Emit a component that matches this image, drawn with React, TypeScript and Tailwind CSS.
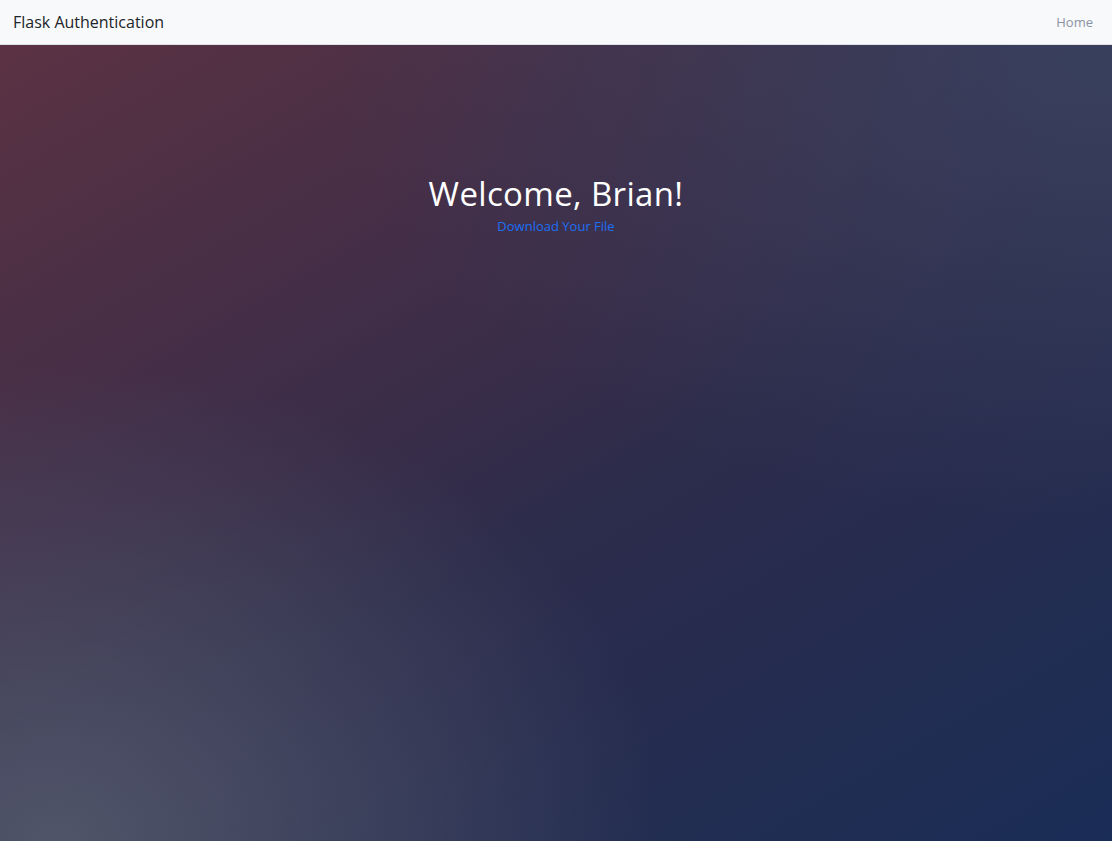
import React from 'react';

const Navbar: React.FC = () => (
    <nav className="flex h-[45px] items-center justify-between border-b border-[#dee2e6] bg-[#f8f9fa] pl-[13px] pr-[19px]">
        <a href="#" className="text-[16px] text-[#212529]">Flask Authentication</a>
        <a href="#" className="pt-[1px] text-[13px] text-[#8a93a4]">Home</a>
    </nav>
);

export default function App() {
    return (
        <div className="flex h-[841px] flex-col overflow-hidden font-['Open_Sans','Noto_Sans',sans-serif]">
            <Navbar />

            {/* page body with layered gradient backdrop */}
            <main className="flex flex-1 flex-col items-center bg-[radial-gradient(ellipse_55%_60%_at_5%_100%,rgba(82,87,107,0.95),rgba(82,87,107,0)_100%),radial-gradient(ellipse_70%_60%_at_100%_0%,rgba(56,66,96,0.9),rgba(56,66,96,0)_100%),linear-gradient(150deg,#5b3243_0%,#3d2d48_38%,#2d2c4b_55%,#1a2d56_100%)] pt-[129px]">
                <h1 className="text-[33px] font-normal leading-[40px] tracking-[0.35px] text-white">Welcome, Brian!</h1>
                <a href="#" className="mt-[3px] text-[13px] text-[#1b6ff5]">Download Your File</a>
            </main>
        </div>
    );
}
